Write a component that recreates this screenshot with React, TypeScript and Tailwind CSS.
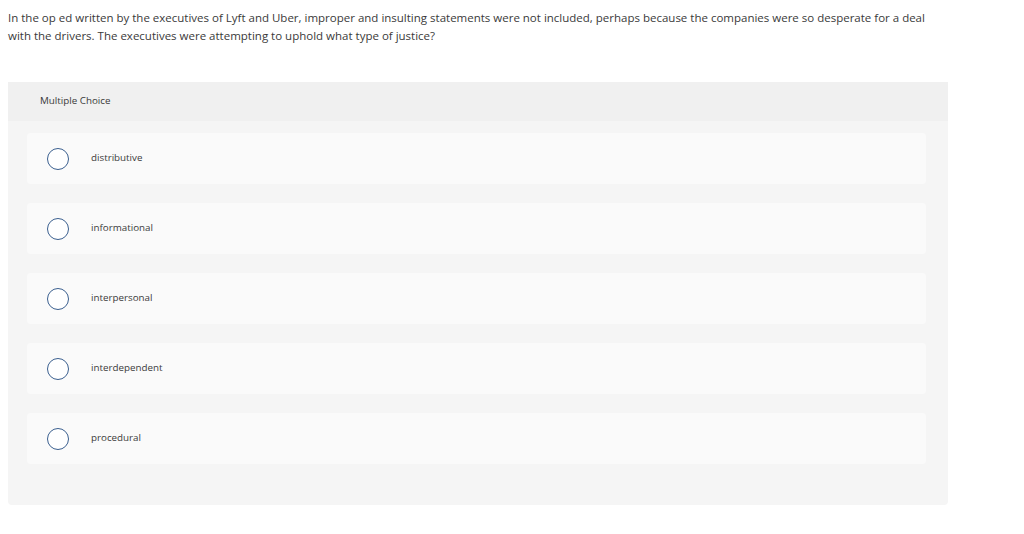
const options = ["distributive", "informational", "interpersonal", "interdependent", "procedural"];

export default function App() {
  return (
    <div className="min-h-screen bg-white text-[#3a3a3a] font-['Open_Sans',sans-serif]">
      <div className="px-2 pt-[9px]">
        <p className="text-[11.5px] leading-[18px] w-[935px]">
          In the op ed written by the executives of Lyft and Uber, improper and insulting statements were not included, perhaps because the companies were so desperate for a deal with the drivers. The executives were attempting to uphold what type of justice?
        </p>
      </div>
      <div className="ml-2 mt-[37px] w-[940px] h-[423px] rounded-sm bg-[#f5f5f5]">
        <div className="h-[39px] bg-[#f0f0f0] flex items-center pl-[32px] text-[9.8px]">Multiple Choice</div>
        <div className="flex flex-col gap-[19px] pt-[12px] pl-[19px] pr-[22px]">
          {options.map((o) => (
            <div key={o} className="h-[51px] rounded-sm bg-[#fafafa] flex items-center">
              <span className="ml-[20px] w-[22px] h-[22px] rounded-full border border-[#3a5f8f] bg-white" />
              <span className="ml-[22px] text-[9.8px]">{o}</span>
            </div>
          ))}
        </div>
      </div>
    </div>
  );
}
